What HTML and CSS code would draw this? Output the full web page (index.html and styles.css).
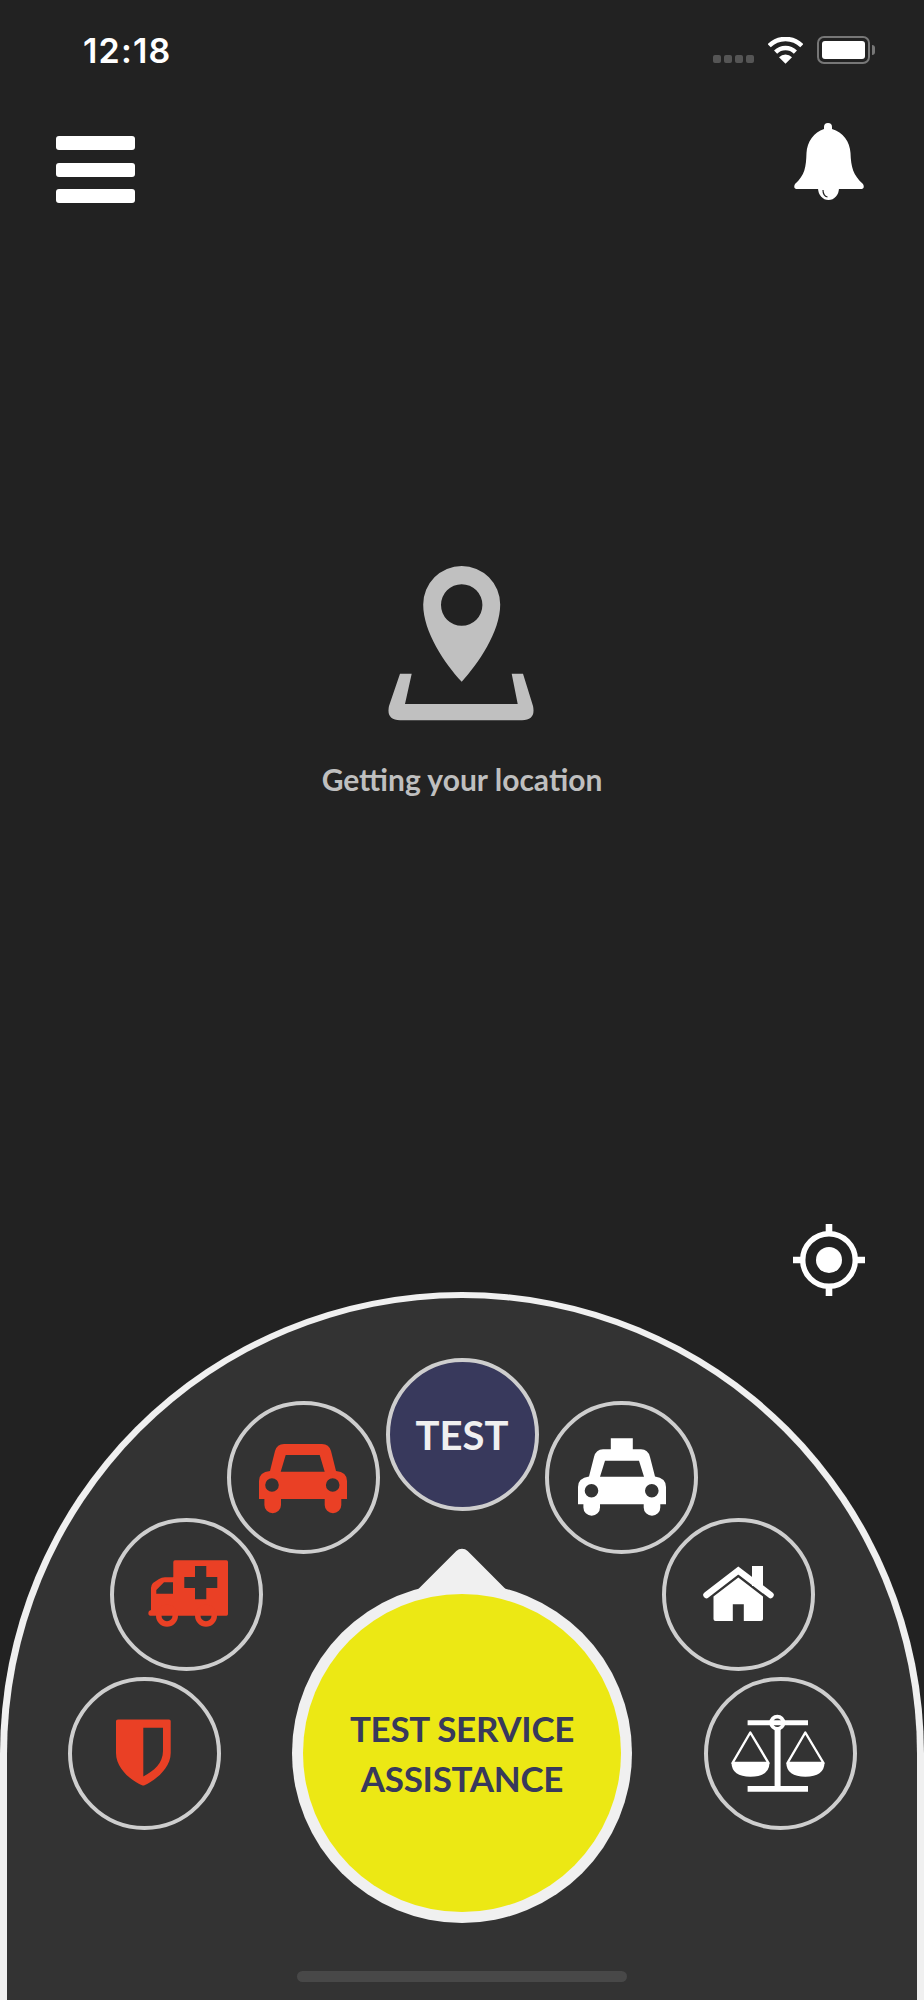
FILE: index.html
```html
<!DOCTYPE html>
<html lang="en">
<head>
  <meta charset="UTF-8" />
  <meta name="viewport" content="width=device-width, initial-scale=1.0"/>
  <title>Test Service Assistance</title>
  <link rel="stylesheet" href="styles.css">
</head>
<body>
<div class="app">

  <div class="status-bar">
    <span class="time">12:18</span>
    <div class="status-icons">
      <div class="signal"><i></i><i></i><i></i><i></i></div>
      <svg class="wifi" width="35" height="27" viewBox="0 0 35 27">
        <path d="M1.2 8.7A23 23 0 0 1 33.8 8.7M7.6 15.1A14 14 0 0 1 27.4 15.1" fill="none" stroke="#fff" stroke-width="4.4"/>
        <path d="M17.5 26.8L11 20.3A9.2 9.2 0 0 1 24 20.3Z" fill="#fff"/>
      </svg>
      <div class="battery"><div class="battery-level"></div></div>
    </div>
  </div>

  <div class="top-bar">
    <div class="menu-btn"><span></span><span></span><span></span></div>
    <svg width="72" height="78" viewBox="0 0 72 78">
      <path d="M25 65a10.500 12 0 0 0 21 0Z" fill="#fff"/>
      <path d="M31 6V4a4 4 0 0 1 8 0V6C50 9 57 19 57.500 30C58 44 60 52 70 61Q72 65 69 66H3Q0 65 2 61C12 52 13 44 13.500 30C14 19 21 9 31 6Z" fill="#fff"/>
      <path d="M30 67q0 6 4.500 7" fill="none" stroke="#222" stroke-width="1.200"/>
    </svg>
  </div>

  <div class="location">
    <svg width="148" height="155" viewBox="0 0 148 155">
      <path fill-rule="evenodd" fill="#c0c0c0" d="M35.200 38.500A38.500 38.500 0 0 1 112.200 38.500C112.200 66 90 98 73.700 115.700C57 98 35.200 66 35.200 38.500ZM53 39a20.700 20.700 0 1 0 41.400 0a20.700 20.700 0 1 0 -41.400 0Z"/>
      <path fill="#c0c0c0" d="M12 107.700H23.700L17 138H129.700L123.700 107.700H135L145 140Q148 154 134 154.300H12Q-2 154 1 140Z"/>
    </svg>
    <p class="location-text">Getting your location</p>
  </div>

  <svg class="locate-btn" width="72" height="72" viewBox="0 0 72 72">
    <circle cx="36" cy="36" r="26.300" fill="none" stroke="#fff" stroke-width="5.500"/>
    <circle cx="36" cy="36" r="13" fill="#fff"/>
    <path d="M36 0V10M36 62V72M0 36H10M62 36H72" stroke="#fff" stroke-width="6.600"/>
  </svg>

  <div class="dial">

    <div class="service service-shield">
      <svg width="100" height="100" viewBox="0 0 100 100">
        <path fill="#ea4025" fill-rule="evenodd" d="M24 16.400H75Q76.700 16.400 76.700 18V50C76.700 66 60 78 50.500 82.300Q49.300 82.900 48 82.300C38 78 22 66 22 50V18Q22 16.400 24 16.400ZM49.300 24.700V73.400C60 68 69 60 69 48V24.700Z"/>
      </svg>
    </div>

    <div class="service service-ambulance">
      <svg width="100" height="100" viewBox="0 0 100 100">
        <path fill="#ea4025" fill-rule="evenodd" d="M38 16.300H89.500Q91 16.300 91 18V70Q91 71.700 89.500 71.700H36V33.300H36.300V18Q36.300 16.300 38 16.300ZM58 22V33H47.300V44H58V55.300H69.300V44H80.300V33H69.300V22Z"/>
        <path fill="#ea4025" fill-rule="evenodd" d="M28 33.300H37V71.700H13Q11.300 71.700 11.300 69Q11.300 66.500 14 66V44Q14 41 16 39L22 35Q24.500 33.300 28 33.300ZM36.300 38.300H27L19.300 46V49.700H36.300Z"/>
        <path fill="#ea4025" fill-rule="evenodd" d="M19 71.700a11 11 0 1 0 22 0a11 11 0 1 0 -22 0ZM24.500 71.700a5.500 5.500 0 1 1 11 0a5.500 5.500 0 1 1 -11 0Z"/>
        <path fill="#ea4025" fill-rule="evenodd" d="M58 71.700a11 11 0 1 0 22 0a11 11 0 1 0 -22 0ZM63.500 71.700a5.500 5.500 0 1 1 11 0a5.500 5.500 0 1 1 -11 0Z"/>
      </svg>
    </div>

    <div class="service service-car">
      <svg width="100" height="100" viewBox="0 0 100 100">
        <path fill="#ea4025" fill-rule="evenodd" d="M6 72V54Q6 45 17 44L22 24Q24 17 31 17H69Q76 17 78 24L83 44Q94 45 94 54V72H88.300V78a8.300 8.300 0 0 1 -16.600 0V72H28V78a8.300 8.300 0 0 1 -16.600 0V72ZM32.700 28L27.700 44.700H71.700L66.700 28ZM12.200 58a6.800 6.800 0 1 0 13.600 0a6.800 6.800 0 1 0 -13.600 0ZM72.900 58a6.800 6.800 0 1 0 13.600 0a6.800 6.800 0 1 0 -13.600 0Z"/>
      </svg>
    </div>

    <div class="service service-test">TEST</div>

    <div class="service service-taxi">
      <svg width="100" height="100" viewBox="0 0 100 100">
        <path fill="#fff" fill-rule="evenodd" d="M6 77.300V60Q6 51 17 49.500L22 30Q24 22.300 31 22.300H38.800V11.300H60.800V22.300H69Q76 22.300 78 30L83 49.500Q94 51 94 60V77.300H88.300V80.500a8.300 8.300 0 0 1 -16.600 0V77.300H28V80.500a8.300 8.300 0 0 1 -16.600 0V77.300ZM33 33.700L28 49.700H72L67 33.700ZM12.700 63.700a6.800 6.800 0 1 0 13.600 0a6.800 6.800 0 1 0 -13.600 0ZM73 63.700a6.800 6.800 0 1 0 13.600 0a6.800 6.800 0 1 0 -13.600 0Z"/>
      </svg>
    </div>

    <div class="service service-home">
      <svg width="100" height="100" viewBox="0 0 100 100">
        <path fill="#fff" d="M63 22H74V42H63Z"/>
        <path fill="none" stroke="#fff" stroke-width="6.500" stroke-linecap="round" d="M17.500 51L49.300 26.500L81.500 51"/>
        <path fill="#fff" d="M49.300 33.500L74 52.500V75Q74 77 72 77H54.800V60.300H43.800V77H26.500Q24.500 77 24.500 75V52.500Z"/>
      </svg>
    </div>

    <div class="service service-scales">
      <svg width="100" height="100" viewBox="0 0 100 100">
        <path fill="#fff" d="M16.600 17.300H77V22.300H16.600ZM16.600 83H77V88.700H16.600ZM43.600 25H49.600V84H43.600Z"/>
        <path fill="#fff" fill-rule="evenodd" d="M38.300 19.700a8 8 0 1 0 16 0a8 8 0 1 0 -16 0ZM42 19.700a4.300 4.300 0 1 1 8.600 0a4.300 4.300 0 1 1 -8.600 0Z"/>
        <path fill="none" stroke="#fff" stroke-width="2.400" stroke-linejoin="round" d="M1.500 60L19.300 29.500L37.500 60ZM56.500 60L74.300 29.500L92.500 60Z"/>
        <path fill="#fff" d="M0.500 60.300H38.500Q38 73.700 19.500 73.700Q1 73.700 0.500 60.300ZM55.300 60.300H93.500Q93 73.700 74.400 73.700Q55.800 73.700 55.300 60.300Z"/>
      </svg>
    </div>

    <div class="main-ring">
      <div class="main-face">TEST SERVICE<br>ASSISTANCE</div>
    </div>

    <div class="home-indicator"></div>
  </div>

</div>
</body>
</html>
```

FILE: styles.css
```css
body {
  margin: 0;
  background-color: #222222;
  font-family: "Lato", "Open Sans", sans-serif;
}

.app {
  height: 2000px;
  display: flex;
  flex-direction: column;
  overflow: hidden;
}

/* status bar */
.status-bar {
  height: 64px;
  padding: 36px 54px 0 83px;
  box-sizing: border-box;
  display: flex;
  justify-content: space-between;
  align-items: center;
  flex-shrink: 0;
}

.time {
  font-family: "Inter", sans-serif;
  font-size: 34px;
  font-weight: 600;
  letter-spacing: 1.200px;
  color: #fff;
}

.status-icons {
  display: flex;
  align-items: flex-end;
  gap: 14px;
}

.signal {
  display: flex;
  gap: 3px;
  margin-bottom: 1px;
}

.signal i {
  width: 8px;
  height: 8px;
  border-radius: 2px;
  background-color: #555;
}

.battery {
  width: 53px;
  height: 28px;
  box-sizing: border-box;
  border: 2px solid #777;
  border-radius: 7px;
  padding: 3px;
  position: relative;
}

.battery::after {
  content: "";
  position: absolute;
  right: -7px;
  top: 7px;
  width: 3px;
  height: 10px;
  border-radius: 0 3px 3px 0;
  background-color: #777;
}

.battery-level {
  height: 100%;
  background-color: #fff;
  border-radius: 3px;
}

/* top icons */
.top-bar {
  margin-top: 59px;
  padding: 0 59px 0 56px;
  display: flex;
  justify-content: space-between;
  align-items: flex-start;
  flex-shrink: 0;
}

.menu-btn {
  margin-top: 13px;
  width: 79px;
  display: flex;
  flex-direction: column;
  gap: 12.500px;
}

.menu-btn span {
  height: 14px;
  background-color: #fff;
  border-radius: 3px;
}

/* location message */
.location {
  margin-top: 363px;
  display: flex;
  flex-direction: column;
  align-items: center;
}

.location-text {
  margin: 40px 0 0 0;
  font-size: 30px;
  font-weight: 700;
  line-height: 36px;
  color: #bfbfbf;
}

.locate-btn {
  margin-top: auto;
  margin-bottom: -4px;
  margin-right: 59px;
  align-self: flex-end;
  flex-shrink: 0;
}

/* bottom dial */
.dial {
  height: 708px;
  box-sizing: border-box;
  flex-shrink: 0;
  position: relative;
  background-color: #333333;
  border: 7px solid #f0f0f0;
  border-top-width: 6px;
  border-bottom: none;
  border-radius: 462px 462px 0 0;
}

.service {
  position: absolute;
  width: 153px;
  height: 153px;
  box-sizing: border-box;
  border: 4.500px solid #cecece;
  border-radius: 50%;
  display: flex;
  align-items: center;
  justify-content: center;
}

.service-shield { left: 60.500px; top: 378.800px; }
.service-ambulance { left: 103.200px; top: 219.500px; }
.service-car { left: 219.800px; top: 102.500px; }
.service-test { left: 378.500px; top: 60.200px; }
.service-taxi { left: 538px; top: 102.500px; }
.service-home { left: 655px; top: 219.500px; }
.service-scales { left: 697.200px; top: 378.500px; }

.service-test {
  background-color: #38395c;
  color: #f0f0f0;
  font-size: 40px;
  font-weight: 700;
}

.main-ring {
  position: absolute;
  left: 285px;
  top: 285px;
  width: 340px;
  height: 340px;
  padding: 11px;
  box-sizing: border-box;
  border-radius: 50%;
  background-color: #f0f0f0;
}

.main-ring::before {
  content: "";
  position: absolute;
  left: 130px;
  top: -21.400px;
  width: 80px;
  height: 80px;
  border-radius: 8px;
  background-color: #f0f0f0;
  transform: rotate(45deg);
}

.main-face {
  position: relative;
  width: 318px;
  height: 318px;
  border-radius: 50%;
  background-color: #ece814;
  color: #38395c;
  font-size: 35px;
  font-weight: 700;
  letter-spacing: -0.300px;
  line-height: 50px;
  text-align: center;
  display: flex;
  align-items: center;
  justify-content: center;
}

.home-indicator {
  position: absolute;
  left: 290px;
  bottom: 18px;
  width: 330px;
  height: 11px;
  border-radius: 6px;
  background-color: #484848;
}
```
